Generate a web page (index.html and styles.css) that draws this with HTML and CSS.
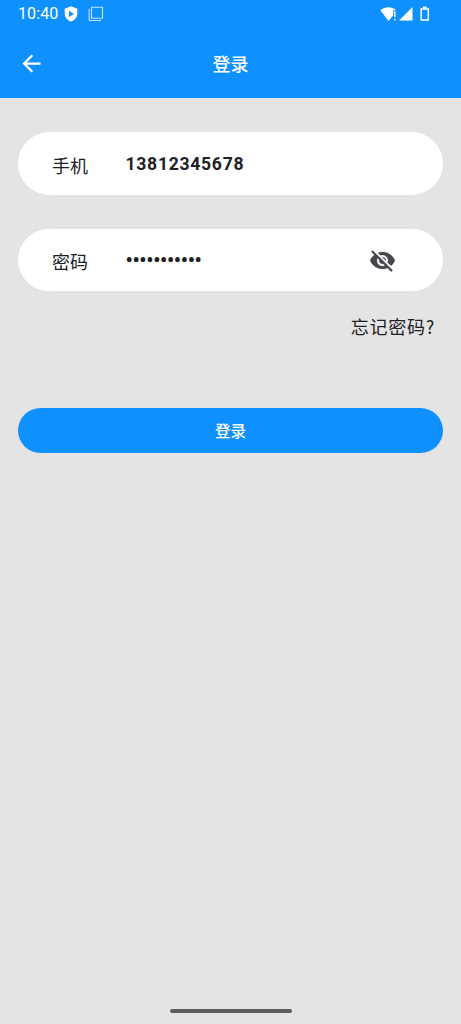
FILE: index.html
```html
<!DOCTYPE html>
<html lang="zh-CN">
<head>
<meta charset="utf-8">
<title>登录</title>
<link rel="stylesheet" href="styles.css">
</head>
<body>
<div class="screen">
  <header class="header">
    <div class="status">
      <span class="clock">10:40</span>
      <svg class="shield" viewBox="0 0 14 16"><path fill="#fff" fill-rule="evenodd" d="M7 .3 13.300 2.800v4.700c0 3.700-2.500 6.700-6.300 8-3.800-1.300-6.300-4.300-6.300-8V2.800zM5 4.800v6.100l5-3z"/></svg>
      <svg class="copy" viewBox="0 0 16 16"><path fill="none" stroke="#c4e2ff" stroke-width="1.100" d="M3.500 1.200h11v11h-11zM1.200 2.700v11.800h12"/></svg>
      <svg class="signals" viewBox="0 0 50 16">
        <path fill="#fff" d="M.4 4.200C4.900.2 11.900.2 16.200 4.200h-3v5.300L8.500 14.900z"/>
        <path fill="#fff" d="M14.200 5.200h1.300v6h-1.300zM14.200 12.800h1.300v1.700h-1.300zM32.500 1v13.500H19z"/>
        <path fill="none" stroke="#fff" stroke-width="1.500" d="M41.200 2.900h7.100v11h-7.100z"/>
        <path fill="#fff" d="M42.800.6h3.900v2h-3.900z"/>
      </svg>
    </div>
    <div class="nav">
      <svg class="back" viewBox="0 0 24 24"><path fill="#fff" d="M20 11H7.830l5.590-5.590L12 4l-8 8 8 8 1.410-1.410L7.830 13H20v-2z"/></svg>
      <h1 class="title">登录</h1>
      <span class="back"></span>
    </div>
  </header>
  <main class="form">
    <div class="field">
      <span class="label">手机</span>
      <span class="value">13812345678</span>
    </div>
    <div class="field">
      <span class="label">密码</span>
      <span class="value dots">•••••••••••</span>
      <svg class="eye" viewBox="0 0 24 24"><path fill="#49454f" stroke="#49454f" stroke-width=".25" d="M12 7c2.760 0 5 2.240 5 5 0 .650-.130 1.260-.360 1.830l2.920 2.920c1.510-1.260 2.700-2.890 3.430-4.750-1.730-4.390-6-7.500-11-7.500-1.400 0-2.740.250-3.980.700l2.160 2.160C10.740 7.130 11.350 7 12 7zM2 4.270l2.280 2.280.460.460C3.080 8.300 1.780 10.020 1 12c1.730 4.390 6 7.500 11 7.500 1.550 0 3.030-.300 4.380-.840l.420.420L19.730 22 21 20.730 3.270 3 2 4.270zM7.530 9.800l1.550 1.550c-.050.210-.080.430-.080.650 0 1.660 1.340 3 3 3 .220 0 .440-.030.650-.080l1.550 1.550c-.670.330-1.410.530-2.200.530-2.760 0-5-2.240-5-5 0-.790.200-1.530.530-2.200zm4.310-.780 3.150 3.150.020-.160c0-1.660-1.340-3-3-3l-.170.010z"/></svg>
    </div>
    <a class="forgot">忘记密码?</a>
    <button class="submit">登录</button>
  </main>
  <div class="home-bar"></div>
</div>
</body>
</html>
```
FILE: styles.css
```css
* { box-sizing: border-box; }
body {
  margin: 0;
  background: #e4e4e4;
  color: #202124;
  font-family: Roboto, "Noto Sans CJK SC", sans-serif;
}
.screen {
  height: 1024px;
  display: flex;
  flex-direction: column;
}
.header {
  height: 98.400px;
  background: #0f90ff;
  color: #fff;
}
.status {
  height: 28px;
  padding: 0 31px 1px 18px;
  display: flex;
  align-items: center;
}
.clock {
  width: 45.500px;
  font-size: 16px;
  line-height: 20px;
  letter-spacing: 0.100px;
}
.shield { width: 14px; height: 16px; }
.copy { width: 16px; height: 16px; margin-left: 10px; }
.signals { width: 50px; height: 16px; margin-left: auto; }
.nav {
  height: 70px;
  padding: 0 18px;
  display: flex;
  align-items: center;
  justify-content: space-between;
}
.back { width: 27px; height: 27px; }
.title {
  margin: 0;
  padding-top: 3px;
  font-size: 18px;
  line-height: 26px;
  font-weight: 500;
}
.form {
  flex: 1;
  padding: 34px 18px 0;
  display: flex;
  flex-direction: column;
}
.field {
  height: 62.500px;
  margin-bottom: 33.800px;
  padding: 0 47px 0 34px;
  border-radius: 32px;
  background: #fff;
  display: flex;
  align-items: center;
}
.label {
  width: 73.500px;
  padding-top: 6px;
  font-size: 18px;
  line-height: 26px;
}
.value {
  font-size: 17.600px;
  font-weight: 700;
  letter-spacing: 0.700px;
}
.dots {
  font-size: 20px;
  letter-spacing: -0.280px;
}
.eye { width: 27px; height: 27px; margin: 2px 0 0 auto; }
.forgot {
  align-self: flex-end;
  margin: -13px 8px 0 0;
  font-family: "Noto Sans CJK SC", sans-serif;
  font-size: 18px;
  line-height: 28px;
  letter-spacing: 0.750px;
}
.submit {
  height: 45px;
  margin-top: 67.800px;
  padding: 4px 0 0;
  border: 0;
  border-radius: 23px;
  background: #0f90ff;
  color: #fff;
  font: 500 15.500px/22px Roboto, "Noto Sans CJK SC", sans-serif;
}
.home-bar {
  width: 122px;
  height: 4.500px;
  margin: 0 auto 11px;
  border-radius: 3px;
  background: #5c5c5c;
}
```
